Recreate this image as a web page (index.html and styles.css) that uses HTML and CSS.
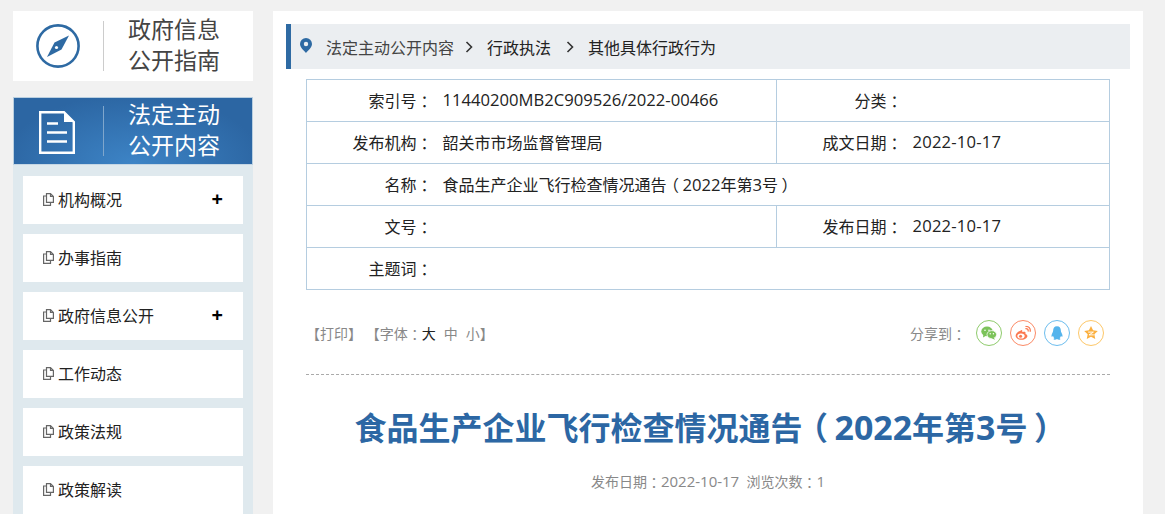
FILE: index.html
```html
<!DOCTYPE html>
<html lang="zh-CN">
<head>
    <meta charset="UTF-8">
    <title>食品生产企业飞行检查情况通告（2022年第3号）</title>
    <link rel="stylesheet" href="styles.css">
</head>
<body>
    <div class="page">
        <div class="side">
            <div class="guide">
                <div class="side-icon">
                    <svg width="44" height="44" viewBox="0 0 44 44">
                        <circle cx="22" cy="22" r="20.6" fill="none" stroke="#2e6aa3" stroke-width="2.6"/>
                        <path d="M33 11.5 L25.5 25.5 L11 33 L18.5 18.5 Z" fill="#2e6aa3"/>
                        <circle cx="20.5" cy="23.5" r="1.6" fill="#fff"/>
                    </svg>
                </div>
                <div class="side-title">政府信息<br>公开指南</div>
            </div>
            <div class="menu-head">
                <div class="side-icon">
                    <svg class="doc-icon" width="36" height="43" viewBox="0 0 36 43">
                        <path d="M1.2 1.2 H25 L34.8 11 V41.8 H1.2 Z" fill="none" stroke="#fff" stroke-width="2.4"/>
                        <path d="M25 1.2 V11 H34.8 Z" fill="#fff"/>
                        <path d="M8 12.5 H19 M8 21.5 H28 M8 30.5 H28" stroke="#fff" stroke-width="2.6"/>
                    </svg>
                </div>
                <div class="side-title">法定主动<br>公开内容</div>
            </div>
            <ul class="menu">
                <li class="menu-item">
                    <span class="menu-label"><svg class="page-icon" viewBox="0 0 11 13"><path d="M3.5 .6 H7.5 L10.4 3.5 V9.4 H3.5 Z M7.5 .6 V3.5 H10.4 M3.5 3 H.6 V12.4 H7.5 V9.4" fill="none" stroke="#666" stroke-width="1.2"/></svg>机构概况</span>
                    <span class="plus">+</span>
                </li>
                <li class="menu-item">
                    <span class="menu-label"><svg class="page-icon" viewBox="0 0 11 13"><path d="M3.5 .6 H7.5 L10.4 3.5 V9.4 H3.5 Z M7.5 .6 V3.5 H10.4 M3.5 3 H.6 V12.4 H7.5 V9.4" fill="none" stroke="#666" stroke-width="1.2"/></svg>办事指南</span>
                </li>
                <li class="menu-item">
                    <span class="menu-label"><svg class="page-icon" viewBox="0 0 11 13"><path d="M3.5 .6 H7.5 L10.4 3.5 V9.4 H3.5 Z M7.5 .6 V3.5 H10.4 M3.5 3 H.6 V12.4 H7.5 V9.4" fill="none" stroke="#666" stroke-width="1.2"/></svg>政府信息公开</span>
                    <span class="plus">+</span>
                </li>
                <li class="menu-item">
                    <span class="menu-label"><svg class="page-icon" viewBox="0 0 11 13"><path d="M3.5 .6 H7.5 L10.4 3.5 V9.4 H3.5 Z M7.5 .6 V3.5 H10.4 M3.5 3 H.6 V12.4 H7.5 V9.4" fill="none" stroke="#666" stroke-width="1.2"/></svg>工作动态</span>
                </li>
                <li class="menu-item">
                    <span class="menu-label"><svg class="page-icon" viewBox="0 0 11 13"><path d="M3.5 .6 H7.5 L10.4 3.5 V9.4 H3.5 Z M7.5 .6 V3.5 H10.4 M3.5 3 H.6 V12.4 H7.5 V9.4" fill="none" stroke="#666" stroke-width="1.2"/></svg>政策法规</span>
                </li>
                <li class="menu-item">
                    <span class="menu-label"><svg class="page-icon" viewBox="0 0 11 13"><path d="M3.5 .6 H7.5 L10.4 3.5 V9.4 H3.5 Z M7.5 .6 V3.5 H10.4 M3.5 3 H.6 V12.4 H7.5 V9.4" fill="none" stroke="#666" stroke-width="1.2"/></svg>政策解读</span>
                </li>
            </ul>
        </div>

        <div class="main">
            <div class="crumb">
                <svg class="pin" width="12" height="15" viewBox="0 0 12 15"><path fill-rule="evenodd" d="M6 0 A6 6 0 0 1 12 6 C12 9.5 8 12.5 6 15 C4 12.5 0 9.5 0 6 A6 6 0 0 1 6 0 Z M6 3.8 A2.2 2.2 0 1 0 6 8.2 A2.2 2.2 0 1 0 6 3.8 Z" fill="#2e6aa3"/></svg>
                <span class="crumb-first">法定主动公开内容</span>
                <svg class="arrow" width="8" height="12" viewBox="0 0 8 12"><path d="M1.5 1 L6.5 6 L1.5 11" fill="none" stroke="#333" stroke-width="1.6"/></svg>
                <span>行政执法</span>
                <svg class="arrow arrow-next" width="8" height="12" viewBox="0 0 8 12"><path d="M1.5 1 L6.5 6 L1.5 11" fill="none" stroke="#333" stroke-width="1.6"/></svg>
                <span>其他具体行政行为</span>
            </div>

            <table class="info">
                <tr>
                    <th>索引号<span class="mark">：</span></th>
                    <td class="val-wide"><span class="num">11440200MB2C909526/2022-00466</span></td>
                    <th class="th-right">分类<span class="mark">：</span></th>
                    <td></td>
                </tr>
                <tr>
                    <th>发布机构<span class="mark">：</span></th>
                    <td class="val-wide">韶关市市场监督管理局</td>
                    <th class="th-right">成文日期<span class="mark">：</span></th>
                    <td><span class="num date">2022-10-17</span></td>
                </tr>
                <tr>
                    <th>名称<span class="mark">：</span></th>
                    <td colspan="3">食品生产企业飞行检查情况通告<span class="mark">（</span><span class="num">2022</span>年第<span class="num">3</span>号<span class="mark">）</span></td>
                </tr>
                <tr>
                    <th>文号<span class="mark">：</span></th>
                    <td class="val-wide"></td>
                    <th class="th-right">发布日期<span class="mark">：</span></th>
                    <td><span class="num date">2022-10-17</span></td>
                </tr>
                <tr>
                    <th>主题词<span class="mark">：</span></th>
                    <td colspan="3"></td>
                </tr>
            </table>

            <div class="tools">
                <div class="tools-left">
                    <span>【打印】</span>
                    <span>【字体<span class="mark">：</span><b class="size-on">大</b><b class="size">中</b><b class="size">小</b>】</span>
                </div>
                <div class="share">
                    <span class="share-label">分享到<span class="mark">：</span></span>
                    <span class="share-btn wechat">
                        <svg width="20" height="18" viewBox="0 0 20 18"><ellipse cx="7.5" cy="7" rx="7.2" ry="6" fill="#7cc35a"/><path d="M3 11 L2.5 14.5 L7 12 Z" fill="#7cc35a"/><ellipse cx="13.5" cy="11" rx="6" ry="5" fill="#7cc35a" stroke="#fff"/><path d="M16 15 L17.5 17.5 L13 15.5 Z" fill="#7cc35a"/><circle cx="5" cy="5.5" r="1" fill="#fff"/><circle cx="10" cy="5.5" r="1" fill="#fff"/><circle cx="11.5" cy="10" r=".9" fill="#fff"/><circle cx="15.5" cy="10" r=".9" fill="#fff"/></svg>
                    </span>
                    <span class="share-btn weibo">
                        <svg width="20" height="18" viewBox="0 0 20 18"><path d="M8 5.5 C4.5 6.5 .8 9.5 .8 12.5 C.8 15.5 4.5 17.5 8.5 17.5 C12.5 17.5 15.5 15 15.5 12.8 C15.5 11 13.8 10.5 13 10.2 C13.6 8.6 13 7.5 11.5 7.5 C10.5 7.5 9.2 8 9 8 C9.3 6.5 9 5 8 5.5 Z" fill="#fb7a52"/><ellipse cx="7.5" cy="12.8" rx="4.6" ry="3.2" fill="#fff"/><circle cx="7" cy="13" r="1.9" fill="#fb7a52"/><path d="M13 3.5 C15.5 3 17 5 16.3 7.2 M13 .8 C17 0 20 3.5 18.8 7.5" fill="none" stroke="#fb7a52" stroke-width="1.6"/></svg>
                    </span>
                    <span class="share-btn qq">
                        <svg width="16" height="18" viewBox="0 0 16 18"><path d="M8 .5 C4.5 .5 3.2 3 3.2 6 C3.2 7.5 2.6 8 1.8 9.8 C1 11.6 .9 13.5 1.5 13.8 C2 14 2.6 13 3 12.5 C3.3 14 4 15 4.8 15.5 C3.8 16 3.5 16.5 4 17 C5 17.6 7 17.3 8 16.6 C9 17.3 11 17.6 12 17 C12.5 16.5 12.2 16 11.2 15.5 C12 15 12.7 14 13 12.5 C13.4 13 14 14 14.5 13.8 C15.1 13.5 15 11.6 14.2 9.8 C13.4 8 12.8 7.5 12.8 6 C12.8 3 11.5 .5 8 .5 Z" fill="#55b4ec"/></svg>
                    </span>
                    <span class="share-btn qzone">
                        <svg width="18" height="17" viewBox="0 0 18 17"><path d="M9 .5 L11.6 5.8 L17.5 6.6 L13.2 10.7 L14.3 16.5 L9 13.8 L3.7 16.5 L4.8 10.7 L.5 6.6 L6.4 5.8 Z" fill="#fbb040"/><path d="M5.5 8 H12 L6.5 11.5 H12.5" fill="none" stroke="#fff" stroke-width="1.2"/></svg>
                    </span>
                </div>
            </div>

            <h1 class="title">食品生产企业飞行检查情况通告<span class="mark">（</span><span class="num">2022</span>年第<span class="num">3</span>号<span class="mark">）</span></h1>
            <p class="meta">发布日期<span class="mark">：</span><span class="num">2022-10-17</span>&nbsp;&nbsp;浏览次数<span class="mark">：</span><span class="num">1</span></p>
        </div>
    </div>
</body>
</html>
```

FILE: styles.css
```css
* {
    box-sizing: border-box;
}
html, body {
    margin: 0;
    height: 514px;
    overflow: hidden;
}
body {
    background-color: #f1f1f1;
    font-family: "Open Sans", "Noto Sans CJK SC", sans-serif;
    color: #333;
}
/* fullwidth colon and brackets, centred in their own 1em box */
.mark {
    display: inline-block;
    width: 1em;
    text-align: center;
    font-feature-settings: "palt";
}
.page {
    display: flex;
    align-items: flex-start;
    gap: 20px;
    padding: 11px 0 0 13px;
}
.side {
    width: 240px;
    flex: none;
}
.guide {
    display: flex;
    align-items: center;
    height: 70px;
    background-color: #fff;
    color: #444;
}
.side-icon {
    width: 91px;
    height: 50px;
    border-right: 1px solid #ccc;
    padding-right: 23px;
    display: flex;
    align-items: center;
    justify-content: flex-end;
}
.side-title {
    margin: -4px 0 0 24px;
    font-size: 23px;
    line-height: 31px;
    font-family: "Noto Sans CJK SC", sans-serif;
}
.menu-head {
    display: flex;
    align-items: center;
    height: 68px;
    margin-top: 16px;
    color: #fff;
    border: 1px solid #b9cfe0;
    border-bottom-color: #c5d6e4;
    background: radial-gradient(ellipse 130px 70px at 50% 100%, #3d84c6, #2c66a3);
}
.menu-head .side-icon {
    border-right-color: #7fa6cc;
    padding-right: 28px;
    width: 90px;
}
.doc-icon {
    margin-top: 3px;
}
.menu {
    list-style: none;
    margin: 0;
    padding: 11px 10px 0;
    background-color: #dfe9ee;
}
.menu-item {
    display: flex;
    align-items: center;
    justify-content: space-between;
    height: 48px;
    margin-bottom: 10px;
    padding: 0 20px 2px;
    background-color: #fff;
    color: #222;
    font-size: 16px;
}
.menu-label {
    display: flex;
    align-items: center;
    font-family: "Noto Sans CJK SC", sans-serif;
}
.page-icon {
    width: 11px;
    height: 13px;
    margin-right: 4px;
}
.plus {
    font-size: 20px;
    font-weight: 700;
    color: #000;
    line-height: 1;
}
.main {
    width: 870px;
    height: 520px;
    flex: none;
    background-color: #fff;
    padding: 13px 13px 0;
}
.crumb {
    display: flex;
    align-items: center;
    height: 45px;
    background-color: #ebeef1;
    border-left: 5px solid #2e6aa3;
    padding-left: 9px;
    font-size: 16px;
    color: #222;
    font-family: "Noto Sans CJK SC", sans-serif;
}
.pin {
    margin-top: -3px;
}
.crumb-first {
    color: #444;
    margin-left: 14px;
}
.arrow {
    margin: 0 14px 0 11px;
}
.arrow-next {
    margin-left: 15px;
}
.info {
    width: 804px;
    margin: 10px 0 0 20px;
    border-collapse: collapse;
    table-layout: fixed;
    font-size: 16px;
    color: #222;
}
.info th, .info td {
    height: 42px;
    padding: 0 0 2px;
    border-top: 1px solid #b5cde0;
    border-bottom: 1px solid #b5cde0;
    font-weight: 400;
}
.info th {
    width: 126px;
    text-align: right;
    border-left: 1px solid #b5cde0;
}
.info td {
    padding-left: 10px;
    border-right: 1px solid #b5cde0;
}
.info .val-wide {
    width: 344px;
}
.info .th-right {
    width: 126px;
}
.num {
    font-size: 1.04em;
}
.date {
    letter-spacing: .2px;
}
.tools {
    display: flex;
    align-items: center;
    justify-content: space-between;
    width: 804px;
    height: 85px;
    margin-left: 20px;
    padding: 1px 6px 0 0;
    border-bottom: 1px dashed #aaa;
    font-size: 14px;
    color: #888;
}
.size-on, .size {
    font-weight: 400;
    margin-right: 8px;
}
.size-on {
    color: #222;
}
.size:last-child {
    margin-right: 0;
}
.share {
    display: flex;
    align-items: center;
    gap: 8px;
}
.share-label {
    flex: none;
    white-space: nowrap;
    margin-right: 2px;
}
.share-btn {
    display: flex;
    align-items: center;
    justify-content: center;
    flex: none;
    width: 26px;
    height: 26px;
    border-radius: 50%;
    border: 1px solid #ccc;
}
.share-btn svg {
    transform: scale(.8);
}
.wechat {
    border-color: #8fcb6c;
}
.weibo {
    border-color: #fb8a66;
}
.qq {
    border-color: #6cbdee;
}
.qzone {
    border-color: #fdc768;
}
.title {
    margin: 29px 2px 0 0;
    text-align: center;
    font-size: 32px;
    line-height: 46px;
    font-weight: 700;
    color: #2c67a4;
}
.title .num {
    font-size: 1.06em;
}
.meta {
    margin: 20px 0 0;
    text-align: center;
    font-size: 14px;
    color: #888;
}
.meta .num {
    font-size: 15px;
}
```
